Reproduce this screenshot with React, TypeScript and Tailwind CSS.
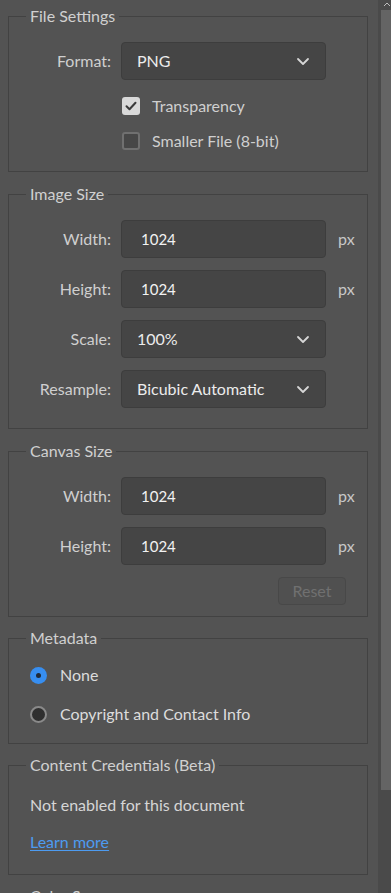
import { ReactNode } from 'react';

const Chevron = () => (
  <svg width="14" height="9" viewBox="0 0 14 9" fill="none">
    <path d="M2 2l5 5 5-5" stroke="#d6d6d6" strokeWidth="1.8" strokeLinecap="round" strokeLinejoin="round" />
  </svg>
);

const Group = ({ title, children, className = '' }: { title: string; children: ReactNode; className?: string }) => (
  <fieldset className={`border border-[#424242] ${className}`}>
    <legend className="ml-[17px] px-[4px] text-[16px] leading-[20px] text-[#d0d0d0]">{title}</legend>
    {children}
  </fieldset>
);

const Row = ({ label, children, unit, className = '' }: { label: string; children: ReactNode; unit?: string; className?: string }) => (
  <div className={`flex items-center ${className}`}>
    <span className="w-[102px] text-right text-[16px] text-[#cfcfcf]">{label}</span>
    {children}
    {unit && <span className="ml-[12px] text-[16px] text-[#c8c8c8]">{unit}</span>}
  </div>
);

const Select = ({ value }: { value: string }) => (
  <div className="ml-[10px] flex h-[38px] w-[205px] items-center justify-between rounded-[4px] border border-[#3d3d3d] bg-[#454545] pl-[15px] pr-[15px] text-[16px] text-[#ececec]">
    <span>{value}</span>
    <Chevron />
  </div>
);

const Input = ({ value }: { value: string }) => (
  <div className="ml-[10px] flex h-[38px] w-[205px] items-center rounded-[4px] border border-[#3d3d3d] bg-[#454545] pl-[19px] text-[15px] text-[#f2f2f2]">
    {value}
  </div>
);

const Check = ({ checked, label, className = '' }: { checked: boolean; label: string; className?: string }) => (
  <div className={`flex h-[20px] items-center pl-[113px] ${className}`}>
    {checked ? (
      <span className="flex h-[18px] w-[18px] items-center justify-center rounded-[3px] bg-[#d9d9d9]">
        <svg width="12" height="10" viewBox="0 0 12 10" fill="none">
          <path d="M1.5 5.2l3 3 6-6.5" stroke="#3a3a3a" strokeWidth="2" strokeLinecap="round" strokeLinejoin="round" />
        </svg>
      </span>
    ) : (
      <span className="h-[18px] w-[18px] rounded-[3px] border-2 border-[#707070] bg-[#474747]" />
    )}
    <span className="ml-[12px] text-[16px] text-[#cfcfcf]">{label}</span>
  </div>
);

const Radio = ({ selected, label, className = '' }: { selected: boolean; label: string; className?: string }) => (
  <div className={`flex h-[20px] items-center pl-[21px] ${className}`}>
    {selected ? (
      <span className="flex h-[17px] w-[17px] items-center justify-center rounded-full bg-[#378ef0]">
        <span className="h-[5px] w-[5px] rounded-full bg-[#1f2a38]" />
      </span>
    ) : (
      <span className="h-[17px] w-[17px] rounded-full border-2 border-[#8a8a8a] bg-[#2f2f2f]" />
    )}
    <span className="ml-[13px] text-[16px] text-[#dcdcdc]">{label}</span>
  </div>
);

export default function App() {
  return (
    <div className="flex h-[893px] w-[391px] overflow-hidden bg-[#535353] font-['Lato',sans-serif]">
      <div className="w-[378px] shrink-0 pl-2 pr-[10px] pt-[6px]">
        <Group title="File Settings" className="pb-[20px]">
          <Row label="Format:" className="mt-[16px]">
            <Select value="PNG" />
          </Row>
          <Check checked label="Transparency" className="mt-[16px]" />
          <Check checked={false} label="Smaller File (8-bit)" className="mt-[15px]" />
        </Group>

        <Group title="Image Size" className="mt-[12px] pb-[20px]">
          <div className="mt-[16px] flex flex-col gap-[12px]">
            <Row label="Width:" unit="px">
              <Input value="1024" />
            </Row>
            <Row label="Height:" unit="px">
              <Input value="1024" />
            </Row>
            <Row label="Scale:">
              <Select value="100%" />
            </Row>
            <Row label="Resample:">
              <Select value="Bicubic Automatic" />
            </Row>
          </div>
        </Group>

        <Group title="Canvas Size" className="mt-[12px] pb-[11px]">
          <div className="mt-[16px] flex flex-col gap-[12px]">
            <Row label="Width:" unit="px">
              <Input value="1024" />
            </Row>
            <Row label="Height:" unit="px">
              <Input value="1024" />
            </Row>
          </div>
          <div className="mt-[12px] flex justify-end pr-[21px]">
            <button className="h-[28px] w-[68px] rounded-[4px] border border-[#484848] bg-[#505050] text-[16px] text-[#707070]">
              Reset
            </button>
          </div>
        </Group>

        <Group title="Metadata" className="mt-[11px] pb-[19px]">
          <Radio selected label="None" className="mt-[17px]" />
          <Radio selected={false} label="Copyright and Contact Info" className="mt-[19px]" />
        </Group>

        <Group title="Content Credentials (Beta)" className="mt-[11px] pb-[22px]">
          <p className="mt-[20px] pl-[21px] text-[16px] leading-[20px] text-[#d6d6d6]">Not enabled for this document</p>
          <p className="mt-[17px] pl-[21px] text-[16px] leading-[20px]">
            <a className="text-[#4d9bf0] underline underline-offset-2">Learn more</a>
          </p>
        </Group>

        <Group title="Color Space" className="mt-[11px] pb-[20px]">
          <div className="h-[60px]" />
        </Group>
      </div>

      <div className="relative flex w-[13px] flex-col bg-[#4a4a4a]">
        <svg className="absolute right-0 top-[1px]" width="8" height="6" viewBox="0 0 8 6" fill="none">
          <path d="M1 5l3-3 3 3" stroke="#bdbdbd" strokeWidth="1" />
        </svg>
        <div className="ml-[3px] mt-[10px] h-[780px] bg-[#646464]" />
      </div>
    </div>
  );
}
